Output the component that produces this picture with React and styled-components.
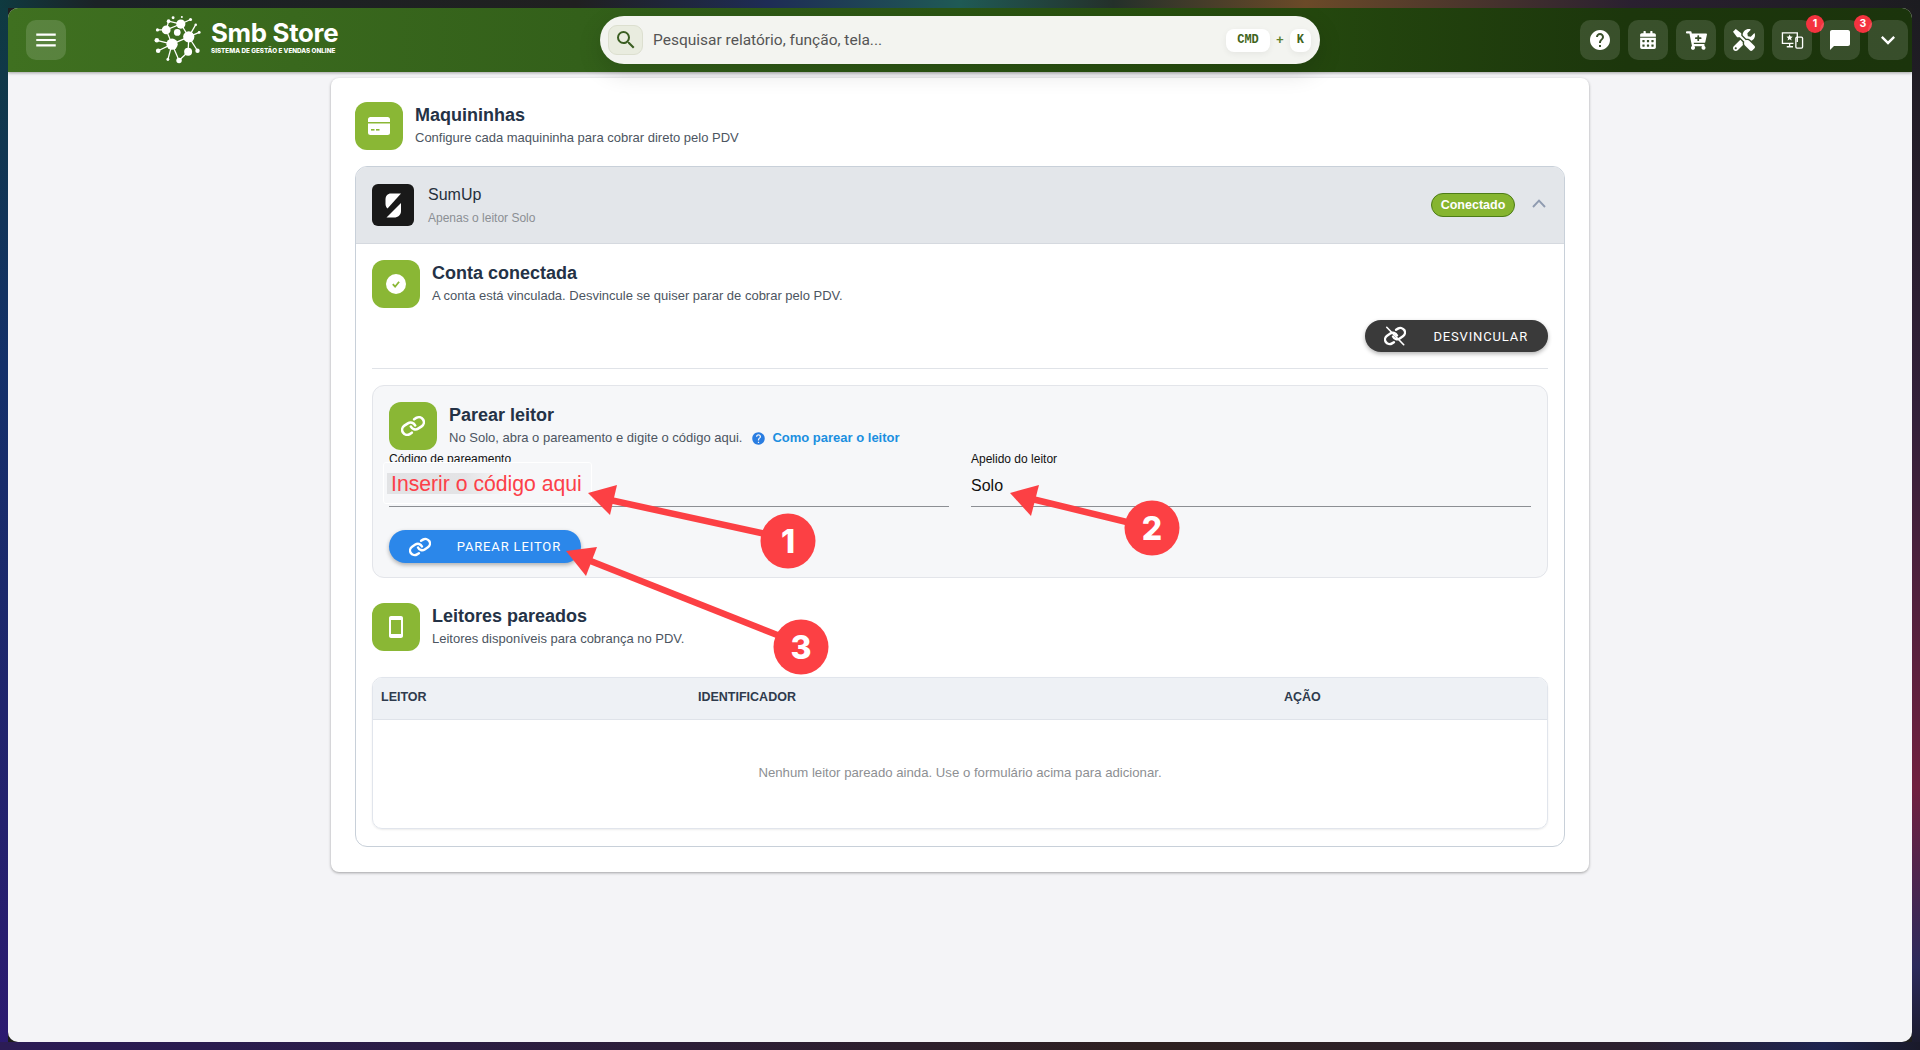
import React from 'react';
import styled, { createGlobalStyle } from 'styled-components';
import { MdHelp, MdChatBubble, MdExpandMore, MdSearch, MdSmartphone, MdMenu } from 'react-icons/md';
import { FaCalendarAlt, FaTools, FaCartPlus } from 'react-icons/fa';

const Global = createGlobalStyle`
  html, body { margin: 0; padding: 0; }
  body {
    width: 1920px;
    height: 1050px;
    overflow: hidden;
    font-family: "Liberation Sans", Arial, sans-serif;
    background:
      linear-gradient(90deg, #0f3a40 0, #1b2226 5%, #202020 30%, #1e2c55 40%, #1f5a55 50%, #24302a 58%, #6b4a28 68%, #2a2030 85%, #1c1c20 100%) top left / 100% 8px no-repeat,
      linear-gradient(90deg, #2c1c55 0, #2a1c50 10%, #2e2020 60%, #2c2030 85%, #1e2450 95%, #1a1a2a 100%) bottom left / 100% 8px no-repeat,
      linear-gradient(180deg, #0f3a40 0, #14306a 35%, #2c1a70 100%) top left / 8px 100% no-repeat,
      linear-gradient(180deg, #1c1c20 0, #33203a 40%, #702040 75%, #2c2a5c 92%, #1a1a2a 100%) top right / 8px 100% no-repeat,
      #1e1e1e;
  }
  #root { position: relative; width: 1920px; height: 1050px; }
`;

const Win = styled.div`
  position: absolute; /* the app window sits on the desktop wallpaper */
  left: 8px; top: 8px;
  width: 1904px; height: 1034px;
  border-radius: 10px;
  overflow: hidden;
  background: #f4f4f7;
  display: flex;
  flex-direction: column;
`;

const TopBar = styled.header`
  height: 64px;
  flex: none;
  display: flex;
  align-items: center;
  padding: 0 4px 0 18px;
  background: linear-gradient(90deg, #3f7020 0%, #33601a 30%, #28500f 60%, #1c360c 85%, #1b340c 100%);
  box-shadow: 0 1px 3px rgba(0,0,0,.35);
  position: relative;
  z-index: 2;
`;

const MenuBtn = styled.div`
  width: 40px; height: 40px;
  border-radius: 10px;
  background: rgba(255,255,255,.14);
  color: #fff;
  display: flex; align-items: center; justify-content: center;
  font-size: 26px;
`;

const Brand = styled.div`
  display: flex;
  align-items: center;
  gap: 9px;
  margin-left: 88px;
  width: 450px;
  color: #fff;
`;

const BrandText = styled.div`
  display: flex;
  flex-direction: column;
`;

const BrandName = styled.div`
  font-family: Inter, sans-serif;
  font-weight: 700;
  font-size: 25.8px;
  line-height: 25px;
  letter-spacing: -0.3px;
  margin-top: -5px;
`;

const BrandTag = styled.div`
  font-family: Inter, sans-serif;
  font-weight: 800;
  font-size: 6.3px;
  line-height: 9px;
  margin-top: 2px;
  white-space: nowrap;
`;

const Search = styled.div`
  width: 720px;
  height: 48px;
  margin-left: -4px;
  border-radius: 24px;
  background: #f3f4f0;
  box-shadow: 0 8px 24px rgba(0,0,0,.14);
  display: flex;
  align-items: center;
  padding: 0 9px 0 8px;
  box-sizing: border-box;
`;

const SearchIcon = styled.div`
  width: 35px; height: 30px;
  box-sizing: border-box;
  border-radius: 9px;
  border: 1px solid #dcdfcf;
  background: #e9ecdf;
  color: #3b5e22;
  display: flex; align-items: center; justify-content: center;
  font-size: 24px;
`;

const Placeholder = styled.div`
  flex: 1;
  margin-left: 10px;
  font-family: Roboto, sans-serif;
  font-size: 15.5px;
  color: #555;
`;

const Kbd = styled.div`
  height: 23px;
  padding: 0 ${p => p.$pad}px;
  background: #fff;
  border-radius: 8px;
  font-family: "Liberation Mono", monospace;
  font-size: 12px;
  font-weight: 700;
  color: #3f6420;
  display: flex; align-items: center;
  box-shadow: 0 2px 6px rgba(0,0,0,.06);
`;

const Plus = styled.span`
  width: 20px;
  text-align: center;
  font-family: "Liberation Mono", monospace;
  font-size: 13px;
  font-weight: 700;
  color: #5d8030;
`;

const Actions = styled.div`
  margin-left: auto;
  display: flex;
  gap: 8px;
`;

const IconBtn = styled.div`
  position: relative;
  width: 40px; height: 40px;
  border-radius: 10px;
  background: rgba(255,255,255,.13);
  color: #fff;
  display: flex; align-items: center; justify-content: center;
  font-size: ${p => p.$size || 22}px;
`;

const Dot = styled.span`
  position: absolute;
  top: -5px; right: -12px;
  width: 18px; height: 18px;
  border-radius: 50%;
  background: #f4333f;
  color: #fff;
  font: 700 10.5px/18px Inter, sans-serif;
  text-align: center;
`;

const Main = styled.main`
  flex: 1;
  display: flex;
  justify-content: center;
  align-items: flex-start;
  padding-top: 6px;
`;

const Card = styled.section`
  width: 1258px;
  box-sizing: border-box;
  padding: 24px 24px 25px;
  background: #fff;
  border-radius: 8px;
  box-shadow: 0 1px 3px rgba(0,0,0,.35);
`;

const Heading = styled.div`
  display: flex;
  gap: 12px;
  align-items: flex-start;
`;

const Tile = styled.div`
  width: 48px; height: 48px;
  flex: none;
  border-radius: 12px;
  background: #8ab735;
  color: #fff;
  display: flex; align-items: center; justify-content: center;
  font-size: ${p => p.$size || 24}px;
`;

const HeadText = styled.div`
  display: flex;
  flex-direction: column;
  padding-top: 2px;
`;

const Title = styled.div`
  font-weight: 700;
  font-size: 18px;
  line-height: 22px;
  color: #243246;
`;

const Sub = styled.div`
  font-size: 13px;
  line-height: 16px;
  margin-top: 4px;
  color: #4c5561;
  display: flex;
  align-items: center;
`;

const Accordion = styled.div`
  margin-top: 16px;
  border: 1px solid #c8d0d9;
  border-radius: 12px;
  overflow: hidden;
`;

const AccHead = styled.div`
  height: 77px;
  box-sizing: border-box;
  padding: 0 16px;
  background: #e3e6ea;
  border-bottom: 1px solid #d5d9df;
  display: flex;
  align-items: center;
`;

const Brandmark = styled.div`
  width: 42px; height: 42px;
  margin-right: 14px;
  border-radius: 6px;
  background: #191919;
  display: flex; align-items: center; justify-content: center;
`;

const AccText = styled.div`
  flex: 1;
  display: flex;
  flex-direction: column;
`;

const AccName = styled.div`
  font-size: 16px;
  line-height: 20px;
  color: #26303c;
`;

const AccSub = styled.div`
  font-size: 12px;
  line-height: 14px;
  margin-top: 6px;
  color: #8b8f94;
`;

const Status = styled.div`
  width: 84px; height: 24px;
  box-sizing: border-box;
  border: 1px solid #4d7c17;
  border-radius: 12px;
  background: #86b52f;
  color: #fff;
  font-weight: 700;
  font-size: 12.5px;
  line-height: 22px;
  text-align: center;
  margin-right: 17px;
`;

const Chevron = styled.div`
  width: 14px;
  display: flex;
  margin-right: 2px;
  margin-top: -3px;
`;

const AccBody = styled.div`
  padding: 16px 16px 17px;
`;

const RightRow = styled.div`
  display: flex;
  justify-content: flex-end;
  margin-top: 12px;
`;

const Pill = styled.div`
  height: ${p => p.$h}px;
  width: ${p => p.$w}px;
  box-sizing: border-box;
  padding: 0 ${p => p.$pr}px 0 ${p => p.$pl}px;
  border-radius: 17px;
  background: ${p => p.$bg};
  color: #fff;
  font-family: Roboto, sans-serif;
  font-size: 13px;
  font-weight: 400;
  letter-spacing: .85px;
  display: flex;
  align-items: center;
  justify-content: space-between;
  box-shadow: 0 2px 4px rgba(0,0,0,.3);
`;

const Rule = styled.div`
  height: 1px;
  margin: 16px 0;
  background: #e0e3e8;
`;

const PairBox = styled.div`
  box-sizing: border-box;
  height: 193px;
  border: 1px solid #e3e5ea;
  border-radius: 12px;
  background: #f6f7f9;
  padding: 16px;
`;

const Help = styled.span`
  display: flex;
  margin-left: 9px;
  color: #2a7de1;
  font-size: 15px;
`;

const HowLink = styled.span`
  margin-left: 6px;
  font-weight: 700;
  font-size: 13px;
  color: #1b8fe0;
`;

const Fields = styled.div`
  display: grid;
  grid-template-columns: 1fr 1fr;
  column-gap: 22px;
  margin-top: 2px;
`;

const Field = styled.div`
  position: relative;
  height: 54px;
  border-bottom: 1px solid #8c8f94;
`;

const FieldLabel = styled.div`
  font-size: 12px;
  line-height: 14px;
  color: #111;
`;

const FieldValue = styled.div`
  font-size: 16px;
  line-height: 20px;
  margin-top: 10px;
  color: #111;
`;

const Mask = styled.div`
  position: absolute; /* pasted annotation lying over the field */
  left: -6px; top: 10px;
  width: 209px; height: 42px;
  box-sizing: border-box;
  border: 1px solid #fff;
  border-radius: 3px;
  background: #f6f7f9;
  display: flex;
  align-items: center;
`;

const RedText = styled.div`
  margin: 1px 0 0 3px;
  padding-left: 4px;
  height: 21px;
  line-height: 22px;
  font-size: 21.2px;
  color: #fc4049;
  white-space: nowrap;
  background: linear-gradient(90deg, #e2e3e5 0, #e4e4e6 40%, rgba(228,228,230,0) 62%);
`;

const PairRow = styled.div`
  margin-top: 23px;
  display: flex;
`;

const Leitores = styled.div`
  margin-top: 25px;
`;

const Table = styled.div`
  margin-top: 26px;
  height: 152px;
  box-sizing: border-box;
  border: 1px solid #e1e5ec;
  border-radius: 10px;
  overflow: hidden;
  box-shadow: 0 1px 2px rgba(0,0,0,.08);
  display: flex;
  flex-direction: column;
`;

const THead = styled.div`
  height: 42px;
  flex: none;
  box-sizing: border-box;
  display: grid;
  grid-template-columns: 317px 586px 1fr;
  padding: 0 0 4px 8px;
  align-items: center;
  background: #eef1f5;
  border-bottom: 1px solid #dfe3e9;
`;

const TH = styled.div`
  font-weight: 700;
  font-size: 12.5px;
  color: #2f3b4d;
`;

const Empty = styled.div`
  flex: 1;
  display: flex;
  align-items: center;
  justify-content: center;
  padding-bottom: 4px;
  font-size: 13.2px;
  color: #8d8f93;
`;

const Notes = styled.svg`
  position: absolute; /* annotation layer over the whole screenshot */
  left: 0; top: 0;
  pointer-events: none;
  z-index: 5;
`;

const NoteNum = styled.text`
  font-family: Inter, "Liberation Sans", sans-serif;
  font-weight: 800;
  font-size: 32px;
  fill: #fff;
  text-anchor: middle;
`;

const LogoMark = () => {
  const dots = [[17.3,27,5.4],[33.3,20,5.4],[11.7,13.3,4.2],[22.3,15.7,3.2],[25.7,7.7,4.4],[32.7,34.3,3.8],[4,33.3,2.2],[2.7,23.3,2.2],[24,42.7,2.6],[41.7,33.3,2.1],[43.3,15.7,1.4],[3.3,13.3,1.5],[14,5,1.8],[18.3,1.7,1.4],[26.7,1,1],[35,3.3,1.5],[40,8.3,1.2],[13.3,41.7,1.4]];
  const links = [[0,1],[0,2],[0,6],[0,8],[0,17],[0,7],[1,4],[1,5],[1,9],[1,10],[2,4],[2,11],[2,12],[4,15],[4,12],[5,8],[1,16]];
  return (
    <svg width="48" height="48" viewBox="0 0 46 46">
      {links.map((l, i) => <line key={i} x1={dots[l[0]][0]} y1={dots[l[0]][1]} x2={dots[l[1]][0]} y2={dots[l[1]][1]} stroke="#fff" strokeWidth="1.2" />)}
      {dots.map((d, i) => <circle key={i} cx={d[0]} cy={d[1]} r={d[2]} fill="#fff" />)}
    </svg>
  );
};

const DevicesIcon = () => (
  <svg width="23" height="22" viewBox="0 0 24 22" fill="none" stroke="#fff" strokeWidth="1.4">
    <path d="M17 13V3.5H1.5V14.5H13" />
    <path d="M6 18H12.5M9 15V18" />
    <rect x="15.5" y="8" width="7" height="11.5" rx="1.2" />
    <path d="M9 5.2l1 2.2 2.3.2-1.8 1.5.6 2.3-2.1-1.2-2.1 1.2.6-2.3-1.8-1.5 2.3-.2z" fill="#fff" stroke="none" />
  </svg>
);

const SumUpMark = () => (
  <svg width="42" height="42" viewBox="0 0 42 42" fill="#fff">
    <path d="M29 9.5 H19 C15.5 9.5 13.5 12 13.5 15.5 V20 C13.5 22 14.5 23.5 15.5 24.5 Z" />
    <path d="M29 19 V27 C29 31 26 33.5 22 33.5 H14.5 Z" />
  </svg>
);

const CardGlyph = () => (
  <svg width="22" height="18" viewBox="0 0 22 18">
    <path d="M2.5 0h17A2.5 2.5 0 0 1 22 2.5V5H0V2.5A2.5 2.5 0 0 1 2.5 0z" fill="#fff" />
    <path d="M0 6.5h22v9A2.5 2.5 0 0 1 19.5 18h-17A2.5 2.5 0 0 1 0 15.5z" fill="#fff" />
    <rect x="3" y="12" width="3.5" height="1.6" fill="#8ab735" />
    <rect x="8" y="12" width="3.5" height="1.6" fill="#8ab735" />
  </svg>
);

const CheckGlyph = () => (
  <svg width="20" height="20" viewBox="0 0 20 20">
    <circle cx="10" cy="10" r="10" fill="#fff" />
    <path d="M6.8 10.2l2.3 2.5 4-5" fill="none" stroke="#8ab735" strokeWidth="1.8" />
  </svg>
);

const Chain = ({ size, slash }) => (
  <svg width={size} height={size} viewBox="0 0 24 24" fill="none" stroke="#fff" strokeWidth="2.6" strokeLinecap="round">
    <g transform="rotate(12 12 12)">
      <path d="M10 13a5 5 0 0 0 7.54.54l3-3a5 5 0 0 0-7.07-7.07l-1.72 1.71" />
      <path d="M14 11a5 5 0 0 0-7.54-.54l-3 3a5 5 0 0 0 7.07 7.07l1.71-1.71" />
    </g>
    {slash && <path d="M3 2.5 L21.5 21.5" strokeWidth="1.8" />}
  </svg>
);

const ChevronUp = () => (
  <svg width="14" height="9" viewBox="0 0 14 9" fill="none" stroke="#8f9bb0" strokeWidth="1.9">
    <path d="M1 8 L7 1.6 L13 8" />
  </svg>
);

const Arrow = ({ line, head, circle, n }) => (
  <g>
    <line x1={line[0]} y1={line[1]} x2={line[2]} y2={line[3]} stroke="#fc4044" strokeWidth="6.5" />
    <polygon points={head} fill="#fc4044" />
    <circle cx={circle[0]} cy={circle[1]} r="27.5" fill="#fc4044" />
    <NoteNum x={circle[0]} y={circle[1] + 12}>{n}</NoteNum>
  </g>
);

export default function App() {
  return (
    <>
      <Global />
      <Win>
        <TopBar>
          <MenuBtn><MdMenu /></MenuBtn>
          <Brand>
            <LogoMark />
            <BrandText>
              <BrandName>Smb Store</BrandName>
              <BrandTag>SISTEMA DE GESTÃO E VENDAS ONLINE</BrandTag>
            </BrandText>
          </Brand>
          <Search>
            <SearchIcon><MdSearch /></SearchIcon>
            <Placeholder>Pesquisar relatório, função, tela...</Placeholder>
            <Kbd $pad={11}>CMD</Kbd>
            <Plus>+</Plus>
            <Kbd $pad={7}>K</Kbd>
          </Search>
          <Actions>
            <IconBtn $size={24}><MdHelp /></IconBtn>
            <IconBtn $size={18}><FaCalendarAlt /></IconBtn>
            <IconBtn $size={21}><FaCartPlus /></IconBtn>
            <IconBtn $size={22}><FaTools /></IconBtn>
            <IconBtn><DevicesIcon /><Dot>1</Dot></IconBtn>
            <IconBtn $size={24}><MdChatBubble /><Dot>3</Dot></IconBtn>
            <IconBtn $size={28}><MdExpandMore /></IconBtn>
          </Actions>
        </TopBar>
        <Main>
          <Card>
            <Heading>
              <Tile><CardGlyph /></Tile>
              <HeadText>
                <Title>Maquininhas</Title>
                <Sub>Configure cada maquininha para cobrar direto pelo PDV</Sub>
              </HeadText>
            </Heading>
            <Accordion>
              <AccHead>
                <Brandmark><SumUpMark /></Brandmark>
                <AccText>
                  <AccName>SumUp</AccName>
                  <AccSub>Apenas o leitor Solo</AccSub>
                </AccText>
                <Status>Conectado</Status>
                <Chevron><ChevronUp /></Chevron>
              </AccHead>
              <AccBody>
                <Heading>
                  <Tile><CheckGlyph /></Tile>
                  <HeadText>
                    <Title>Conta conectada</Title>
                    <Sub>A conta está vinculada. Desvincule se quiser parar de cobrar pelo PDV.</Sub>
                  </HeadText>
                </Heading>
                <RightRow>
                  <Pill $h={32} $w={183} $bg="#3a3a3a" $pl={19} $pr={20}>
                    <Chain size={22} slash />
                    DESVINCULAR
                  </Pill>
                </RightRow>
                <Rule />
                <PairBox>
                  <Heading>
                    <Tile><Chain size={24} /></Tile>
                    <HeadText>
                      <Title>Parear leitor</Title>
                      <Sub>
                        No Solo, abra o pareamento e digite o código aqui.
                        <Help><MdHelp /></Help>
                        <HowLink>Como parear o leitor</HowLink>
                      </Sub>
                    </HeadText>
                  </Heading>
                  <Fields>
                    <Field>
                      <FieldLabel>Código de pareamento</FieldLabel>
                      <Mask><RedText>Inserir o código aqui</RedText></Mask>
                    </Field>
                    <Field>
                      <FieldLabel>Apelido do leitor</FieldLabel>
                      <FieldValue>Solo</FieldValue>
                    </Field>
                  </Fields>
                  <PairRow>
                    <Pill $h={33} $w={192} $bg="#2b87ea" $pl={20} $pr={20}>
                      <Chain size={22} />
                      PAREAR LEITOR
                    </Pill>
                  </PairRow>
                </PairBox>
                <Leitores>
                  <Heading>
                    <Tile><MdSmartphone /></Tile>
                    <HeadText>
                      <Title>Leitores pareados</Title>
                      <Sub>Leitores disponíveis para cobrança no PDV.</Sub>
                    </HeadText>
                  </Heading>
                  <Table>
                    <THead>
                      <TH>LEITOR</TH>
                      <TH>IDENTIFICADOR</TH>
                      <TH>AÇÃO</TH>
                    </THead>
                    <Empty>Nenhum leitor pareado ainda. Use o formulário acima para adicionar.</Empty>
                  </Table>
                </Leitores>
              </AccBody>
            </Accordion>
          </Card>
        </Main>
      </Win>
      <Notes width="1920" height="1050" viewBox="0 0 1920 1050">
        <Arrow line={[770, 535, 610, 500]} head="588,493 617,485 610,515" circle={[788, 541]} n="1" />
        <Arrow line={[1135, 524, 1032, 499]} head="1010,493 1039,485 1031,516" circle={[1152, 528]} n="2" />
        <Arrow line={[790, 640, 588, 560]} head="566,551 597,547 586,576" circle={[801, 647]} n="3" />
      </Notes>
    </>
  );
}
